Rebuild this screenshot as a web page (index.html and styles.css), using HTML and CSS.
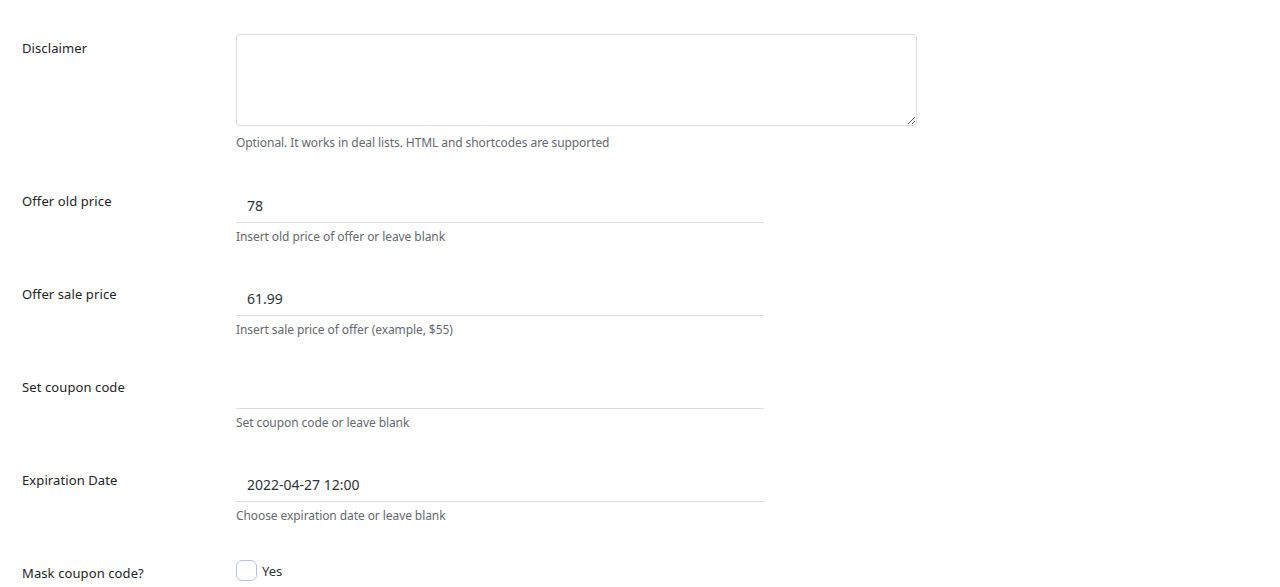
FILE: index.html
```html
<!DOCTYPE html>
<html lang="en">
<head>
<meta charset="utf-8">
<title>Offer fields</title>
<link rel="stylesheet" href="styles.css">
</head>
<body>
<div class="form">
  <div class="row row-area">
    <div class="label">Disclaimer</div>
    <div class="field">
      <textarea class="area"></textarea>
      <p class="desc desc-area">Optional. It works in deal lists. HTML and shortcodes are supported</p>
    </div>
  </div>
  <div class="row">
    <div class="label">Offer old price</div>
    <div class="field">
      <input class="text" type="text" value="78">
      <p class="desc">Insert old price of offer or leave blank</p>
    </div>
  </div>
  <div class="row">
    <div class="label">Offer sale price</div>
    <div class="field">
      <input class="text" type="text" value="61.99">
      <p class="desc">Insert sale price of offer (example, $55)</p>
    </div>
  </div>
  <div class="row">
    <div class="label">Set coupon code</div>
    <div class="field">
      <input class="text" type="text" value="">
      <p class="desc">Set coupon code or leave blank</p>
    </div>
  </div>
  <div class="row">
    <div class="label">Expiration Date</div>
    <div class="field">
      <input class="text" type="text" value="2022-04-27 12:00">
      <p class="desc">Choose expiration date or leave blank</p>
    </div>
  </div>
  <div class="row row-check">
    <div class="label">Mask coupon code?</div>
    <div class="field">
      <label class="check"><span class="box"></span><span class="yes">Yes</span></label>
    </div>
  </div>
</div>
</body>
</html>
```
FILE: styles.css
```css
html, body {
  margin: 0;
  padding: 0;
  background: #ffffff;
}
body {
  font-family: "Noto Sans", "Open Sans", sans-serif;
  color: #1d2327;
  height: 587px;
  overflow: hidden;
}
.form {
  padding: 19px 0 0 22px;
}
.row {
  display: flex;
  align-items: flex-start;
  padding: 15px 0 18px 0;
}
.label {
  width: 214px;
  flex: 0 0 214px;
  padding-top: 5px;
  font-size: 13px;
  line-height: 18px;
  font-weight: 400;
  letter-spacing: 0.1px;
  color: #1d2327;
}
.row-area {
  padding-top: 15px;
  padding-bottom: 19px;
}
.field {
  display: flex;
  flex-direction: column;
}
.area {
  display: block;
  box-sizing: border-box;
  width: 681px;
  height: 92px;
  margin: 0;
  border: 1px solid #dcdcde;
  border-radius: 4px;
  background: #fff;
  resize: vertical;
  font-family: inherit;
}
.text {
  display: block;
  box-sizing: border-box;
  width: 528px;
  height: 36px;
  margin: 0;
  padding: 2px 11px 0 11px;
  border: 0;
  border-bottom: 1px solid #dcdcde;
  background: transparent;
  font-family: inherit;
  font-size: 14px;
  color: #2c3338;
  outline: none;
}
.desc {
  margin: 4px 0 0 0;
  font-size: 12px;
  line-height: 20px;
  letter-spacing: -0.08px;
  color: #646970;
}
.desc-area {
  margin-top: 7px;
}
.row-check {
  padding-top: 16px;
}
.row-check .label {
  padding-top: 4px;
}
.check {
  display: flex;
  align-items: center;
  gap: 5px;
}
.box {
  display: block;
  box-sizing: border-box;
  width: 21px;
  height: 21px;
  border: 1px solid #b9bde6;
  border-radius: 6px;
  background: #fff;
}
.yes {
  font-size: 13px;
  color: #2c3338;
}
```
